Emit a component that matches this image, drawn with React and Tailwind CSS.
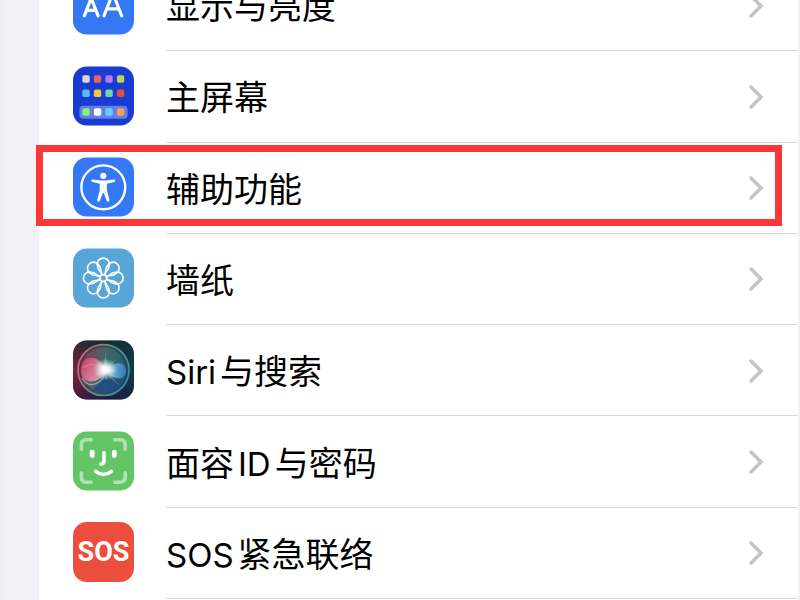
import React from "react";

const DisplayIcon = () => (
  <svg viewBox="0 0 62 60" className="w-full h-full" fill="none">
    <rect width="62" height="60" rx="14" fill="#3478f6" />
    <g
      stroke="#fff"
      strokeWidth="3.2"
      strokeLinecap="round"
      strokeLinejoin="round"
    >
      <path d="M11.5 41 L18.5 23 L25.5 41 M14 35.5 H23" />
      <path d="M31.5 41 L40.5 18 L49.5 41 M34.5 34 H46.5" />
    </g>
  </svg>
);

const homeApps = [
  ["#dcd8ce", "#ee5d68", "#b27af5", "#b9d550"],
  ["#5bbdf7", "#fbc43d", "#6fd8a8", "#ea4b3c"],
  ["#85f27c", "#ffffff", "#63cdfa", "#f2a153"],
];
const homeAppRows = [9, 23.5, 42.5];

const HomeScreenIcon = () => (
  <svg viewBox="0 0 62 60" className="w-full h-full">
    <rect width="62" height="60" rx="14" fill="#183bd3" />
    <rect x="6.5" y="40" width="49" height="13" rx="4" fill="#6280e2" />
    {homeApps.map((colors, row) =>
      colors.map((color, col) => (
        <rect
          key={color}
          x={9.5 + col * 11.7}
          y={homeAppRows[row]}
          width="7.5"
          height="7.5"
          rx="1.8"
          fill={color}
        />
      ))
    )}
  </svg>
);

const AccessibilityIcon = () => (
  <svg viewBox="0 0 62 60" className="w-full h-full">
    <rect width="62" height="60" rx="14" fill="#3478f6" />
    <circle
      cx="30.8"
      cy="30.3"
      r="22.3"
      fill="none"
      stroke="#fff"
      strokeWidth="2.4"
    />
    <circle cx="30.8" cy="18.7" r="3.1" fill="#fff" />
    <path
      d="M20.2 22.4 L28.4 23.3 H33.2 L41.4 22.4 Q43 22.4 43 23.6 Q43 24.6 41.8 24.9 L34.4 26.6 V33 L37 43 Q37.2 44.6 36 44.9 Q34.8 45.1 34.2 43.7 L31.3 36 H30.3 L27.4 43.7 Q26.8 45.1 25.6 44.9 Q24.4 44.6 24.6 43 L27.2 33 V26.6 L19.8 24.9 Q18.6 24.6 18.6 23.6 Q18.6 22.4 20.2 22.4 Z"
      fill="#fff"
    />
  </svg>
);

const WallpaperIcon = () => (
  <svg viewBox="0 0 62 60" className="w-full h-full">
    <rect width="62" height="60" rx="14" fill="#58a6d8" />
    <g
      transform="translate(30.8 30)"
      fill="none"
      stroke="#fff"
      strokeWidth="1.6"
      strokeLinejoin="round"
    >
      <circle r="3.4" />
      {[0, 45, 90, 135, 180, 225, 270, 315].map((angle) => (
        <path
          key={angle}
          transform={`rotate(${angle})`}
          d="M-1 -3.4 L-5.2 -9.5 L-6.2 -14 A6.2 6.2 0 0 1 6.2 -14 L5.2 -9.5 L1 -3.4"
        />
      ))}
    </g>
  </svg>
);

const SiriIcon = () => (
  <svg viewBox="0 0 62 60" className="w-full h-full">
    <defs>
      <linearGradient id="siriBase" x1="0" y1="0.6" x2="1" y2="0.4">
        <stop offset="0" stopColor="#8a1b40" />
        <stop offset="0.45" stopColor="#292c39" />
        <stop offset="1" stopColor="#123a49" />
      </linearGradient>
      <linearGradient id="siriShade" x1="0" y1="0" x2="0" y2="1">
        <stop offset="0" stopColor="#102c2a" stopOpacity="0.6" />
        <stop offset="0.5" stopColor="#102c2a" stopOpacity="0" />
        <stop offset="1" stopColor="#15114a" stopOpacity="0.6" />
      </linearGradient>
      <linearGradient id="siriOrb" x1="0" y1="0.4" x2="1" y2="0.6">
        <stop offset="0" stopColor="#9c2f50" />
        <stop offset="0.5" stopColor="#3b6b68" />
        <stop offset="1" stopColor="#1d5673" />
      </linearGradient>
      <linearGradient id="siriRim" x1="0" y1="0.2" x2="1" y2="0.8">
        <stop offset="0" stopColor="#c9697f" />
        <stop offset="0.5" stopColor="#5f8f88" />
        <stop offset="1" stopColor="#3f8cab" />
      </linearGradient>
      <linearGradient id="siriPink" x1="0" y1="0" x2="1" y2="0.6">
        <stop offset="0" stopColor="#d8355f" />
        <stop offset="1" stopColor="#e3adc2" />
      </linearGradient>
      <linearGradient id="siriBlue" x1="0" y1="0" x2="1" y2="0">
        <stop offset="0" stopColor="#9fd3ea" />
        <stop offset="1" stopColor="#2f7fc6" />
      </linearGradient>
      <radialGradient id="siriGlow">
        <stop offset="0" stopColor="#fff" />
        <stop offset="0.3" stopColor="#fff" stopOpacity="0.9" />
        <stop offset="1" stopColor="#c4fff2" stopOpacity="0" />
      </radialGradient>
    </defs>
    <rect width="62" height="60" rx="14" fill="url(#siriBase)" />
    <rect width="62" height="60" rx="14" fill="url(#siriShade)" />
    <circle
      cx="31"
      cy="30"
      r="26"
      fill="url(#siriOrb)"
      stroke="url(#siriRim)"
      strokeWidth="1.6"
    />
    <circle
      cx="31"
      cy="30"
      r="23.8"
      fill="none"
      stroke="#16323c"
      strokeWidth="1.6"
      opacity="0.5"
    />
    <path
      d="M33 33 C42 42 50 41 53 37 Q49 50 34 53 Q26 54 20 50 Q27 44 33 33 Z"
      fill="#1b4a86"
      opacity="0.8"
    />
    <path
      d="M9 38 C15 49 29 46 33 32"
      fill="none"
      stroke="#8fd0cf"
      strokeWidth="1.3"
      opacity="0.7"
    />
    <path
      d="M34 31 C27 13 9 14 8 29 C7 44 25 47 34 31 Z"
      fill="url(#siriPink)"
      opacity="0.88"
    />
    <path
      d="M10 28 C17 22 26 24 33 31"
      fill="none"
      stroke="#f5a0bc"
      strokeWidth="1"
      opacity="0.6"
    />
    <path
      d="M33 31 C41 20 54 21 54 30.5 C54 41 41 41 33 31 Z"
      fill="url(#siriBlue)"
      opacity="0.85"
    />
    <path d="M34 31 L48 46 L38 38 Z" fill="#b06f88" opacity="0.8" />
    <ellipse cx="33" cy="29.5" rx="12" ry="11" fill="url(#siriGlow)" />
    <path
      d="M33 12 L35 25 L44 19 L37 28 L45 32 L35 32 L34 41 L31.5 33 L20 36 L29 30 L22 20 L31 26 Z"
      fill="#fff"
      opacity="0.18"
    />
  </svg>
);

const FaceIdIcon = () => (
  <svg viewBox="0 0 62 60" className="w-full h-full" fill="none">
    <rect width="62" height="60" rx="14" fill="#65c466" />
    <g stroke="#b2e2b2" strokeWidth="3.6" strokeLinecap="round">
      <path d="M8.5 18 V13.5 Q8.5 8.5 13.5 8.5 H18.5" />
      <path d="M42.5 8.5 H48 Q53 8.5 53 13.5 V18" />
      <path d="M53 42 V46.5 Q53 51.5 48 51.5 H42.5" />
      <path d="M18.5 51.5 H13.5 Q8.5 51.5 8.5 46.5 V42" />
    </g>
    <g stroke="#fff" strokeLinecap="round">
      <path d="M19.5 21 V24.5 M42 21 V24.5" strokeWidth="5" />
      <path d="M31.5 21.5 V30 Q31.5 33 28.2 33" strokeWidth="3.6" />
      <path d="M23 40.5 Q31 47 39 40.5" strokeWidth="3.6" />
    </g>
  </svg>
);

const SosIcon = () => (
  <span className="flex w-full h-full items-center justify-center rounded-[14px] bg-[#eb4e3d] text-white font-[Roboto,sans-serif] font-bold text-[27px] leading-none">
    SOS
  </span>
);

const settings = [
  { id: "display", icon: <DisplayIcon />, parts: ["显示与亮度"] },
  { id: "home", icon: <HomeScreenIcon />, parts: ["主屏幕"] },
  {
    id: "accessibility",
    icon: <AccessibilityIcon />,
    parts: ["辅助功能"],
    highlighted: true,
  },
  { id: "wallpaper", icon: <WallpaperIcon />, parts: ["墙纸"] },
  { id: "siri", icon: <SiriIcon />, parts: ["Siri", "与搜索"] },
  { id: "faceid", icon: <FaceIdIcon />, parts: ["面容", "ID", "与密码"] },
  { id: "sos", icon: <SosIcon />, parts: ["SOS", "紧急联络"] },
];

const isLatin = (text) => /^[A-Za-z]+$/.test(text);

const SettingRow = ({ item }) => (
  <li className="relative">
    <a href={`#${item.id}`} className="flex h-full pl-[34px] gap-8">
      <span className="w-[61px] h-[60px] mb-0.5 shrink-0 self-center">
        {item.icon}
      </span>
      <span className="flex flex-1 items-center justify-between border-b border-[#d8d8da] pr-[34px]">
        <span className="flex items-baseline gap-1 pt-1 text-[34px] leading-10 text-black whitespace-nowrap">
          {item.parts.map((part) => (
            <span key={part} className={isLatin(part) ? "text-[33px]" : ""}>
              {part}
            </span>
          ))}
        </span>
        <svg
          viewBox="0 0 16 26"
          className="w-4 h-[26px] mt-px shrink-0"
          fill="none"
          stroke="#c4c4c7"
          strokeWidth="3.5"
          strokeLinecap="round"
          strokeLinejoin="miter"
        >
          <path d="M3 3 L13 13 L3 23" />
        </svg>
      </span>
    </a>
    {item.highlighted && (
      <span className="absolute -left-[3px] right-4 top-0.5 bottom-2 border-[7px] border-[#fc3737] pointer-events-none" />
    )}
  </li>
);

const App = () => {
  return (
    <div className="flex h-screen overflow-hidden bg-[#f2f1f6] border-l-4 border-[#efefef] pl-[35px] pr-[2px] font-[Inter,'Noto_Sans_CJK_SC',sans-serif]">
      <main className="flex-1 bg-white">
        {/* list is scrolled part way down */}
        <ul className="grid auto-rows-fr min-h-[639px] -mt-10">
          {settings.map((item) => (
            <SettingRow key={item.id} item={item} />
          ))}
        </ul>
      </main>
    </div>
  );
};

export default App;
